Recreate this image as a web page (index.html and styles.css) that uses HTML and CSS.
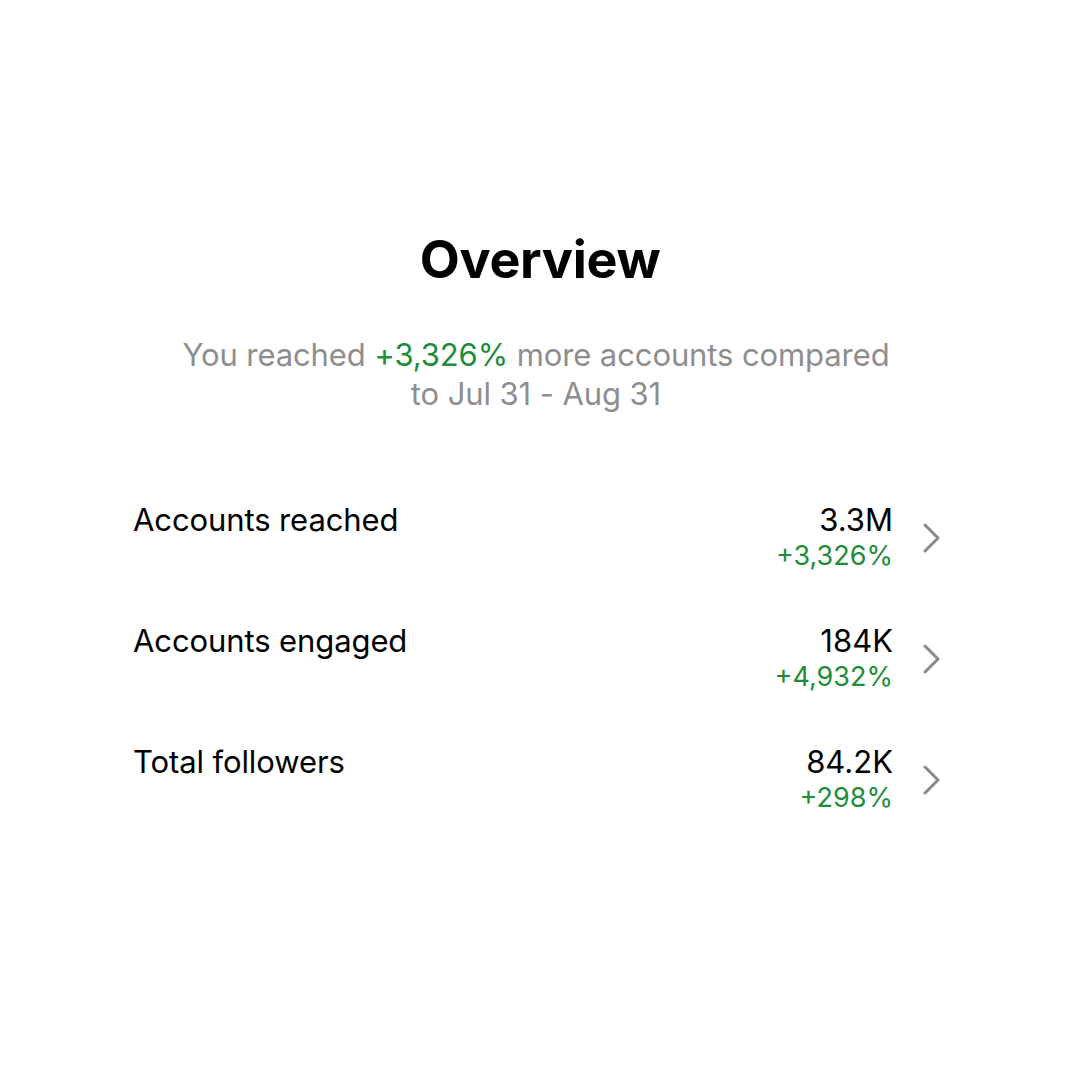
FILE: index.html
```html
<!DOCTYPE html>
<html>
<head>
<meta charset="utf-8">
<link rel="stylesheet" href="styles.css">
</head>
<body>
<main class="page">
  <h1 class="title">Overview</h1>
  <p class="subtitle">You reached <span class="up">+3,326%</span> more accounts compared<br>to Jul 31 - Aug 31</p>
  <ul class="stats">
    <li class="row">
      <span class="label">Accounts reached</span>
      <span class="values"><span class="value">3.3M</span><span class="delta">+3,326%</span></span>
      <svg class="chev" viewBox="0 0 18 30" width="18" height="30"><path d="M2 2 L15 15 L2 28" fill="none" stroke="#8a8a8a" stroke-width="3" stroke-linecap="round" stroke-linejoin="round"/></svg>
    </li>
    <li class="row">
      <span class="label">Accounts engaged</span>
      <span class="values"><span class="value">184K</span><span class="delta">+4,932%</span></span>
      <svg class="chev" viewBox="0 0 18 30" width="18" height="30"><path d="M2 2 L15 15 L2 28" fill="none" stroke="#8a8a8a" stroke-width="3" stroke-linecap="round" stroke-linejoin="round"/></svg>
    </li>
    <li class="row">
      <span class="label">Total followers</span>
      <span class="values"><span class="value">84.2K</span><span class="delta">+298%</span></span>
      <svg class="chev" viewBox="0 0 18 30" width="18" height="30"><path d="M2 2 L15 15 L2 28" fill="none" stroke="#8a8a8a" stroke-width="3" stroke-linecap="round" stroke-linejoin="round"/></svg>
    </li>
  </ul>
</main>
</body>
</html>
```
FILE: styles.css
```css
html, body {
  margin: 0;
  padding: 0;
  background: #ffffff;
}
body {
  width: 1080px;
  height: 1080px;
  font-family: Inter, "Noto Sans", sans-serif;
  color: #000;
}
.page {
  display: flex;
  flex-direction: column;
  align-items: center;
  padding-top: 228px;
}
.title {
  margin: 0;
  font-size: 52px;
  font-weight: 700;
  line-height: 64px;
  letter-spacing: -0.3px;
}
.subtitle {
  margin: 43px 8px 0 0;
  text-align: center;
  font-size: 31px;
  line-height: 39px;
  color: #8e8e8e;
  letter-spacing: -0.1px;
}
.up { color: #1f8c3b; }
.stats {
  list-style: none;
  align-self: flex-start;
  margin: 88px 0 0 133px;
  padding: 0;
  width: 808px;
  display: flex;
  flex-direction: column;
  gap: 48px;
}
.row {
  display: flex;
  align-items: center;
}
.label {
  flex: 1;
  align-self: flex-start;
  font-size: 31px;
  line-height: 37px;
  letter-spacing: -0.1px;
}
.values {
  display: flex;
  flex-direction: column;
  align-items: flex-end;
}
.value {
  font-size: 31px;
  line-height: 37px;
}
.delta {
  font-size: 27px;
  line-height: 36px;
  color: #1f8c3b;
}
.chev {
  margin-left: 30px;
}
```
